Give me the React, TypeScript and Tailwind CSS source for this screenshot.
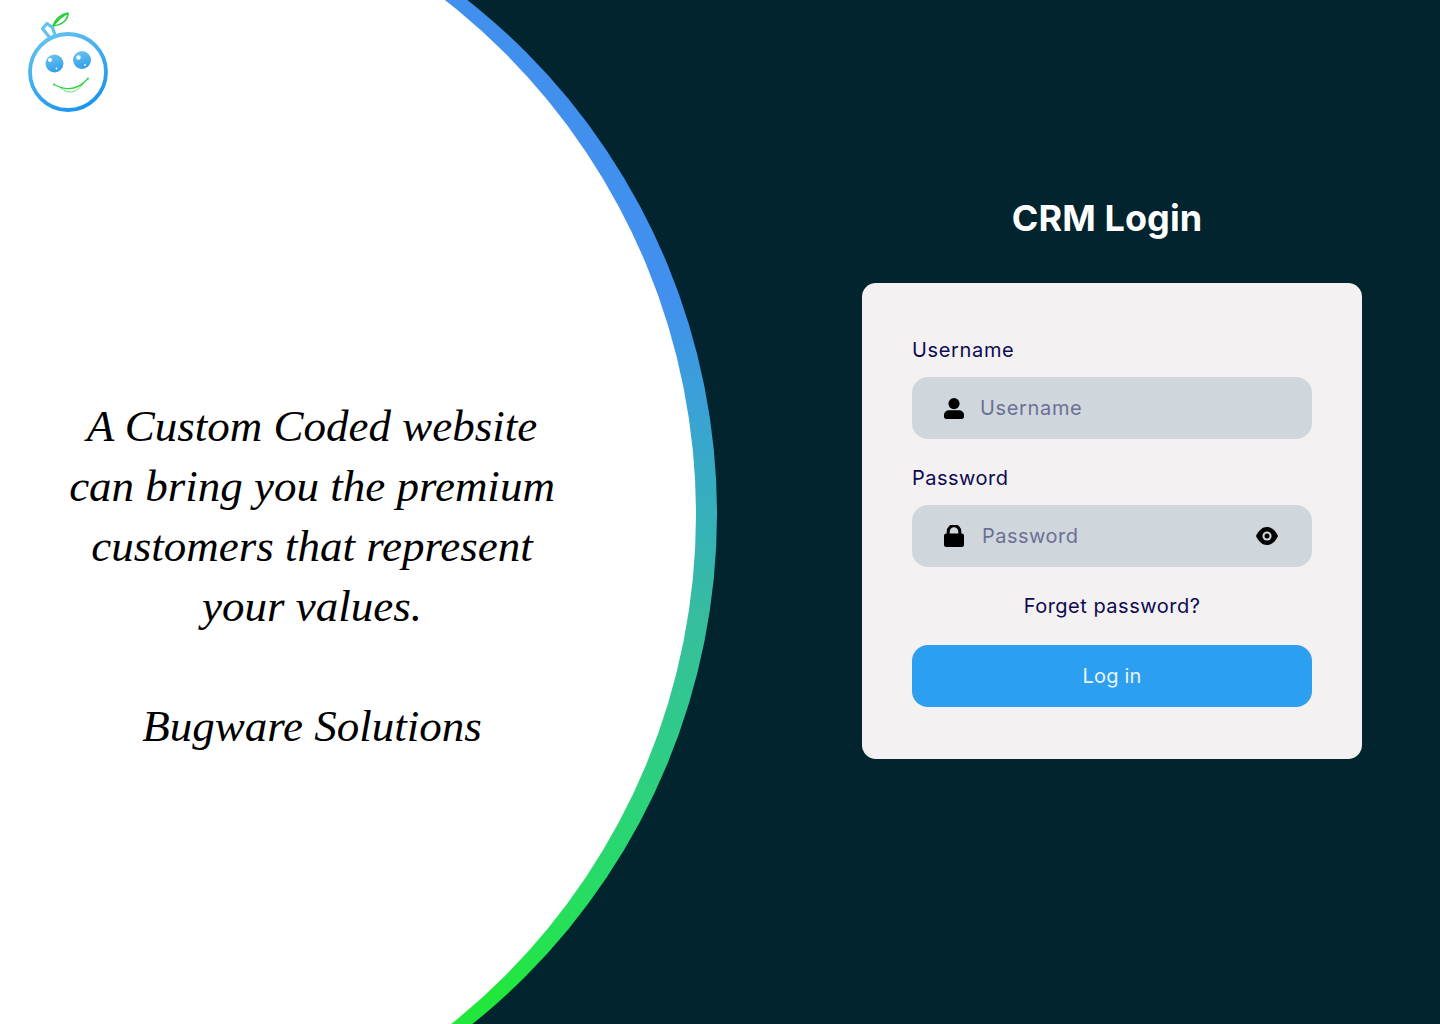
function Logo() {
  return (
    <svg width="130" height="125" viewBox="0 0 130 125" className="block" fill="none">
      <defs>
        <linearGradient id="ring" x1="0.2" y1="0" x2="0.7" y2="1">
          <stop offset="0" stopColor="#62c3ee" />
          <stop offset="1" stopColor="#1a94ee" />
        </linearGradient>
        <linearGradient id="eye" x1="0.3" y1="0" x2="0.6" y2="1">
          <stop offset="0" stopColor="#6cc4ee" />
          <stop offset="1" stopColor="#2f9cea" />
        </linearGradient>
      </defs>
      <circle cx="68" cy="72" r="38" stroke="url(#ring)" strokeWidth="3.8" />
      <path d="M50 38 L42.500 28.500 L47 23.500 L52.500 27.500 L55 35" stroke="#62c3ee" strokeWidth="3.200" strokeLinejoin="round" />
      <path d="M53 26 C56 18 62 14 68 13 C68 20 62 25 53 26 Z M53 26 C57 21 62 16 68 13" stroke="#27cf3a" strokeWidth="1.600" strokeLinejoin="round" />
      <circle cx="54.500" cy="63.500" r="9" fill="url(#eye)" />
      <circle cx="82" cy="60" r="9" fill="url(#eye)" />
      <circle cx="50" cy="60" r="2" fill="#fff" />
      <circle cx="78.500" cy="57.500" r="2.200" fill="#fff" />
      <circle cx="56.500" cy="68.500" r="0.900" fill="#fff" />
      <circle cx="85" cy="65" r="0.900" fill="#fff" />
      <path d="M54 84.500 C66 91 78 90 88 78.500" stroke="#2ad43e" strokeWidth="1.200" strokeLinecap="round" />
      <path d="M60 87 C66 94 76 94 83 84" stroke="#2ad43e" strokeWidth="0.700" />
      <circle cx="54" cy="84.500" r="0.900" fill="#2ad43e" />
      <circle cx="88" cy="78.500" r="0.900" fill="#2ad43e" />
    </svg>
  )
}

function UserIcon() {
  return (
    <svg width="20" height="21" viewBox="0 0 20 21" fill="#000" className="shrink-0">
      <circle cx="10" cy="5.600" r="5.600" />
      <path d="M0 17.200C0 14 2.600 12.200 5 12.200h10c2.400 0 5 1.800 5 5v1.600c0 1.200-.9 2.200-2.200 2.200H2.200C.9 21 0 20 0 18.800z" />
    </svg>
  )
}

function LockIcon() {
  return (
    <svg width="20" height="22" viewBox="0 0 20 22" fill="#000" className="shrink-0">
      <path d="M4.200 10V6.500a5.800 5.800 0 0 1 11.600 0V10" fill="none" stroke="#000" strokeWidth="3" />
      <rect x="0" y="8.500" width="20" height="13.500" rx="2.200" />
    </svg>
  )
}

function EyeIcon() {
  return (
    <svg width="22" height="18" viewBox="0 0 22 18" className="shrink-0">
      <path d="M0 9C2.500 3.400 6.500 0 11 0s8.500 3.400 11 9c-2.500 5.600-6.500 9-11 9S2.500 14.600 0 9z" fill="#000" />
      <circle cx="11" cy="9" r="4.600" fill="#cfd6dc" />
      <circle cx="11" cy="9" r="2.500" fill="#000" />
    </svg>
  )
}

export default function App() {
  return (
    <div className="relative flex h-[1024px] w-full overflow-hidden bg-[#01242e] font-['Inter',sans-serif]">
      {/* big arc behind the left panel */}
      <div className="absolute left-[-591px] top-[-140px] h-[1308px] w-[1308px] rounded-full bg-gradient-to-b from-[#4190ee] from-[33.5%] via-[#36bd9e] via-[58%] to-[#21e73c] to-[86.5%]" />
      <div className="absolute left-[-609px] top-[-138px] h-[1305px] w-[1305px] rounded-full bg-white" />

      <div className="relative flex w-[624px] shrink-0 flex-col">
        <Logo />
        <div className="mt-[271px] text-center font-['Liberation_Serif',serif] text-[45px] italic leading-[60px] text-black">
          <div>A Custom Coded website</div>
          <div>can bring you the premium</div>
          <div>customers that represent</div>
          <div>your values.</div>
          <div className="mt-[60px]">Bugware Solutions</div>
        </div>
      </div>

      <div className="relative ml-[160px] flex w-[656px] flex-col items-center pt-[192px]">
        <h1 className="mr-[10px] text-[36px] font-bold leading-[52px] tracking-[0.1px] text-white">CRM Login</h1>
        <form className="mt-[39px] flex h-[476px] w-[500px] flex-col rounded-[14px] bg-[#f3f1f2] px-[50px] pt-[52px]">
          <label className="text-[20px] leading-[30px] tracking-[0.65px] text-[#0e0a4f]">Username</label>
          <div className="mt-[12px] flex h-[62px] items-center rounded-[16px] bg-[#cfd6dc] pl-[32px] pr-[34px]">
            <UserIcon />
            <input
              placeholder="Username"
              className="ml-[16px] w-full bg-transparent text-[20px] tracking-[0.65px] outline-none placeholder:text-[#6b7096]"
            />
          </div>
          <label className="mt-[24px] text-[20px] leading-[30px] tracking-[0.5px] text-[#0e0a4f]">Password</label>
          <div className="mt-[12px] flex h-[62px] items-center rounded-[16px] bg-[#cfd6dc] pl-[32px] pr-[34px]">
            <LockIcon />
            <input
              placeholder="Password"
              className="ml-[18px] w-full bg-transparent text-[20px] tracking-[0.5px] outline-none placeholder:text-[#6b7096]"
            />
            <EyeIcon />
          </div>
          <a className="mt-[24px] text-center text-[20px] leading-[30px] tracking-[0.5px] text-[#0e0a4f]">Forget password?</a>
          <button type="button" className="mt-[24px] h-[62px] rounded-[16px] bg-[#2d9ff0] text-[20px] tracking-[0.2px] text-[#eaf4fd]">
            Log in
          </button>
        </form>
      </div>
    </div>
  )
}
